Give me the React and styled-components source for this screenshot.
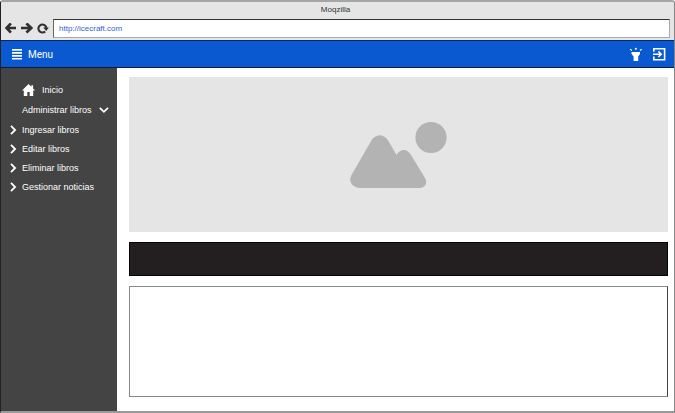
import React from "react";
import styled, { createGlobalStyle } from "styled-components";

const GlobalStyle = createGlobalStyle`
  * { box-sizing: border-box; }
  body {
    margin: 0;
    background: #fff;
    font-family: "Liberation Sans", Arial, sans-serif;
  }
`;

const Browser = styled.div`
  display: flex;
  flex-direction: column;
  min-height: 100vh;
  border: 1px solid #858585;
  border-left-color: #222;
  border-top: 2px solid #a5a5a5;
  border-bottom: 2px solid #999;
  border-radius: 3px 3px 0 0;
  background: #e5e5e5;
`;

const TitleBar = styled.div`
  padding: 3px 4px 4px 0;
  text-align: center;
  font-size: 8px;
  line-height: 10px;
  color: #333;
`;

const AddressBar = styled.form`
  display: flex;
  align-items: center;
  gap: 4px;
  padding: 0 4px 2px;
`;

const NavButton = styled.button`
  display: flex;
  padding: 0;
  border: 0;
  background: none;
  color: #303030;
`;

const AddressInput = styled.input`
  flex: 1;
  min-width: 0;
  height: 19px;
  padding: 0 5px;
  border: 1px solid #aaa;
  border-top-color: #333;
  border-left-color: #666;
  border-radius: 0;
  background: #fff;
  color: #2f62d8;
  font: 8px "Liberation Sans", Arial, sans-serif;
  outline: none;
`;

const AppBar = styled.header`
  display: flex;
  align-items: center;
  justify-content: space-between;
  height: 28px;
  padding: 0 8px 0 10px;
  border-top: 1px solid #10295c;
  border-bottom: 1px solid #061b42;
  background: #0b59d1;
  color: #fff;
`;

const BarButton = styled.button`
  display: flex;
  align-items: center;
  gap: 5px;
  padding: 0;
  border: 0;
  background: none;
  color: #fff;
  font: 10px Roboto, sans-serif;
`;

const Actions = styled.div`
  display: flex;
  align-items: center;
  gap: 9px;
`;

const Body = styled.div`
  display: flex;
  flex: 1;
  background: #fff;
`;

const Sidebar = styled.nav`
  flex: 0 0 116px;
  padding: 12px 0 12px 8px;
  background: #444;
`;

const Menu = styled.ul`
  margin: 0;
  padding: 0;
  list-style: none;
`;

const MenuLink = styled.a`
  display: flex;
  align-items: center;
  gap: ${(p) => (p.$top ? 7 : 5)}px;
  height: ${(p) => (p.$top ? 20 : 19)}px;
  padding-left: ${(p) => (p.$top ? 13 : 0)}px;
  color: #fff;
  font-size: 9px;
  text-decoration: none;
  white-space: nowrap;
`;

const Content = styled.main`
  display: flex;
  flex: 1;
  flex-direction: column;
  gap: 10px;
  min-width: 0;
  padding: 9px 6px 14px 12px;
`;

const Hero = styled.div`
  display: flex;
  align-items: center;
  justify-content: center;
  height: 155px;
  background: #e5e5e5;
`;

const Banner = styled.section`
  height: 34px;
  border: 1px solid #050505;
  background: #231f20;
`;

const Panel = styled.section`
  flex: 1;
  min-height: 110px;
  border: 1px solid #888;
  border-right-color: #444;
  background: #fff;
`;

function Arrow({ forward }) {
  return (
    <svg width="12" height="12" viewBox="0 0 12 12" fill="none" stroke="currentColor" strokeWidth="2.7">
      <path d={forward ? "M0 5h10M5.4.4 10.3 5l-4.9 4.6" : "M11 5H1.5M5.9.4 1.6 5l4.3 4.6"} />
    </svg>
  );
}

function Reload() {
  return (
    <svg width="12" height="12" viewBox="0 0 12 12">
      <path d="M8.2 8.4A4 4 0 1 1 9.4 5" fill="none" stroke="currentColor" strokeWidth="2.1" />
      <path d="M6.2 4.5h5.6L9.2 8z" fill="currentColor" />
    </svg>
  );
}

function Bars() {
  return (
    <svg width="12" height="12" viewBox="0 0 12 12" fill="currentColor">
      <path d="M1 1h10v1.8H1zM1 4h10v1.8H1zM1 7h10v1.8H1zM1 10h10v1.6H1z" />
    </svg>
  );
}

function Torch() {
  return (
    <svg width="14" height="14" viewBox="0 0 14 14" fill="currentColor">
      <path d="M2.5 5h8.5v2L9.2 9.6V14H4.6V9.6L2.5 7z" />
      <circle cx="6.9" cy="1.7" r="1" />
      <path d="m.8 2.6.9-.9 1.5 1.5-.9.9zM13 2.6l-.9-.9-1.5 1.5.9.9z" />
    </svg>
  );
}

function Exit() {
  return (
    <svg width="14" height="14" viewBox="0 0 14 14" fill="none" stroke="currentColor" strokeWidth="1.6">
      <path d="M1.8 4.8V1.8h10.8v11H1.8V9.6M1 7.2h8M6.4 4.4 9.2 7.2 6.4 10" />
    </svg>
  );
}

function Home() {
  return (
    <svg width="13" height="12" viewBox="0 0 13 12" fill="currentColor">
      <path d="M6.5 0 9.4 2.8V1.2h1.7v3.3L13 6.4h-1.8V12H7.7V8H5.3v4H1.8V6.4H0z" />
    </svg>
  );
}

function Chevron({ down }) {
  return down ? (
    <svg width="10" height="8" viewBox="0 0 10 8" fill="none" stroke="currentColor" strokeWidth="1.7">
      <path d="m.8 1.8 4.1 4.1L9 1.8" />
    </svg>
  ) : (
    <svg width="8" height="10" viewBox="0 0 8 10" fill="none" stroke="currentColor" strokeWidth="1.8">
      <path d="m2 .9 4.1 4.1L2 9.1" />
    </svg>
  );
}

function Landscape() {
  return (
    <svg width="97" height="68" viewBox="0 0 97 68" fill="#b3b3b3" aria-hidden="true">
      <circle cx="81" cy="16.5" r="15.6" />
      <path d="M1.5 54 20.5 21C25 12 34.5 12 39 21L46.5 34C50 28 57 27 61 34L75 57C78 62 75 67 69 67H11C2 67-2 60 1.5 54Z" />
    </svg>
  );
}

const sections = ["Ingresar libros", "Editar libros", "Eliminar libros", "Gestionar noticias"];

export default function App() {
  return (
    <>
      <GlobalStyle />
      <Browser>
        <TitleBar>Moqzilla</TitleBar>
        <AddressBar>
          <NavButton type="button" aria-label="Back"><Arrow /></NavButton>
          <NavButton type="button" aria-label="Forward"><Arrow forward /></NavButton>
          <NavButton type="button" aria-label="Reload"><Reload /></NavButton>
          <AddressInput type="text" aria-label="Address" defaultValue="http://icecraft.com" />
        </AddressBar>
        <AppBar>
          <BarButton type="button"><Bars />Menu</BarButton>
          <Actions>
            <BarButton type="button" aria-label="Luz"><Torch /></BarButton>
            <BarButton type="button" aria-label="Salir"><Exit /></BarButton>
          </Actions>
        </AppBar>
        <Body>
          <Sidebar>
            <Menu>
              <li><MenuLink href="#inicio" $top><Home />Inicio</MenuLink></li>
              <li><MenuLink href="#libros" $top>Administrar libros<Chevron down /></MenuLink></li>
              {sections.map((name) => (
                <li key={name}><MenuLink href="#libros"><Chevron />{name}</MenuLink></li>
              ))}
            </Menu>
          </Sidebar>
          <Content>
            <Hero><Landscape /></Hero>
            <Banner />
            <Panel />
          </Content>
        </Body>
      </Browser>
    </>
  );
}
